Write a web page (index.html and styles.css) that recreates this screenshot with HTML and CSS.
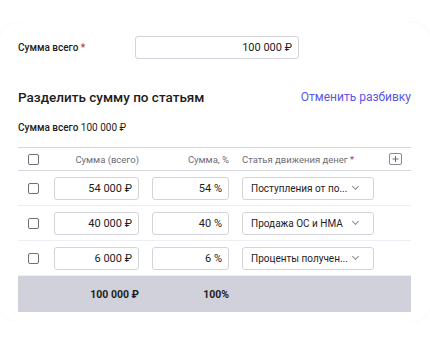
FILE: index.html
```html
<!DOCTYPE html>
<html>
<head>
    <title>Разбивка суммы</title>
    <link rel="stylesheet" href="styles.css">
</head>
<body>
    <div class="card">
        <!-- Общая сумма -->
        <div class="total-field">
            <label class="field-label">Сумма всего <span class="req">*</span></label>
            <div class="input wide">100 000 ₽</div>
        </div>

        <div class="split-head">
            <h2>Разделить сумму по статьям</h2>
            <a class="link" href="#">Отменить разбивку</a>
        </div>

        <div class="summary"><b>Сумма всего</b> 100 000 ₽</div>

        <!-- Таблица статей -->
        <div class="table">
            <div class="row head">
                <div class="cell"><span class="check"></span></div>
                <div class="cell right">Сумма (всего)</div>
                <div class="cell right">Сумма, %</div>
                <div class="cell">Статья движения денег <span class="req">*</span></div>
                <div class="cell"><span class="plus">
                    <svg width="13" height="12" viewBox="0 0 13 12"><rect x="0.5" y="0.5" width="12" height="11" rx="1.5" fill="none" stroke="#8a8a96"/><path d="M6.5 3v6M3.5 6h6" stroke="#6a6a76" stroke-width="1"/></svg>
                </span></div>
            </div>
            <div class="row">
                <div class="cell"><span class="check"></span></div>
                <div class="cell"><div class="input">54 000 ₽</div></div>
                <div class="cell"><div class="input">54 %</div></div>
                <div class="cell"><div class="select"><span>Поступления от по...</span><i class="chev"></i></div></div>
                <div class="cell"></div>
            </div>
            <div class="row">
                <div class="cell"><span class="check"></span></div>
                <div class="cell"><div class="input">40 000 ₽</div></div>
                <div class="cell"><div class="input">40 %</div></div>
                <div class="cell"><div class="select"><span>Продажа ОС и НМА</span><i class="chev"></i></div></div>
                <div class="cell"></div>
            </div>
            <div class="row">
                <div class="cell"><span class="check"></span></div>
                <div class="cell"><div class="input">6 000 ₽</div></div>
                <div class="cell"><div class="input">6 %</div></div>
                <div class="cell"><div class="select"><span>Проценты получен...</span><i class="chev"></i></div></div>
                <div class="cell"></div>
            </div>
            <div class="row foot">
                <div class="cell"></div>
                <div class="cell right">100 000 ₽</div>
                <div class="cell right">100%</div>
                <div class="cell"></div>
                <div class="cell"></div>
            </div>
        </div>
    </div>
</body>
</html>
```

FILE: styles.css
```css
body { margin: 0; background: #fff; font-family: Roboto, "Noto Sans", sans-serif; color: #1d1d22; }
.card { margin: 22px -2px 0; height: 287px; padding: 13px 21px 0 20px; border-radius: 22px;
    background: #fff; box-shadow: 0 0 1px rgba(0,0,0,0.1); }
.total-field { display: flex; align-items: center; height: 24px; }
.field-label { width: 117px; font-size: 10px; font-weight: 500; }
.req { color: #c2304c; }
.input { box-sizing: border-box; height: 23px; border: 1px solid #d3d3db; border-radius: 3px;
    padding: 0 6px; font-size: 11px; line-height: 21px; text-align: right; }
.wide { width: 164px; }
.split-head { display: flex; justify-content: space-between; align-items: center; margin-top: 28px; height: 20px; }
.split-head h2 { margin: 0; font-size: 13.5px; font-weight: 500; }
.link { color: #5a57e4; text-decoration: none; font-size: 12px; }
.summary { margin-top: 14px; font-size: 10px; line-height: 14px; }
.summary b { font-weight: 500; }
.table { margin-top: 12px; width: 393px; }
.row { display: grid; grid-template-columns: 23px 85px 77px 132px 1fr; column-gap: 13px;
    align-items: center; height: 34px; border-bottom: 1px solid #ededf5; }
.row.head { height: 22px; border-top: 1px solid #d6d6de; border-bottom: 1px solid #d6d6de;
    font-size: 9.5px; color: #6d6d78; }
.row.foot { height: 36px; background: #d1d1db; border-bottom: none; font-size: 10.5px; font-weight: 700; }
.right { text-align: right; }
.check { display: block; width: 9px; height: 9px; margin-left: 10px; border: 1px solid #6e6e76; border-radius: 2px; }
.plus { display: block; margin-left: 2px; height: 12px; }
.plus svg { display: block; }
.select { box-sizing: border-box; height: 23px; border: 1px solid #d3d3db; border-radius: 3px;
    padding: 0 8px; display: flex; justify-content: space-between; align-items: center;
    font-size: 10px; white-space: nowrap; }
.chev { flex-shrink: 0; width: 4px; height: 4px; border-right: 1px solid #8a8a96; border-bottom: 1px solid #8a8a96;
    transform: rotate(45deg); margin: -3px 7px 0 0; }
```
